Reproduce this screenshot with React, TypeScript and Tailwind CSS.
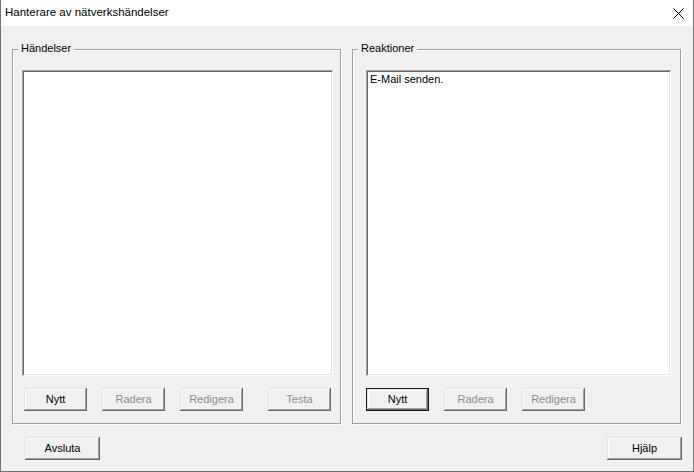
import React from "react";

const bevel =
  "shadow-[inset_-1px_-1px_#696969,inset_1px_1px_#e3e3e3,inset_-2px_-2px_#a0a0a0,inset_2px_2px_#ffffff]";

type BtnProps = {
  label: string;
  disabled?: boolean;
  isDefault?: boolean;
  className?: string;
};

const Button = ({ label, disabled, isDefault, className = "" }: BtnProps) => {
  if (isDefault) {
    return (
      <div className={`h-[23px] border border-[#1a1a1a] ${className}`}>
        <div className={`flex h-full w-full items-center justify-center bg-[#f0f0f0] text-black ${bevel}`}>
          {label}
        </div>
      </div>
    );
  }
  return (
    <div
      className={`flex h-[23px] items-center justify-center bg-[#f0f0f0] ${bevel} ${
        disabled ? "text-[#8d8d8d]" : "text-black"
      } ${className}`}
    >
      {label}
    </div>
  );
};

// etched group box with its caption sitting over the top line
const GroupBox = ({ title, children }: { title: string; children: React.ReactNode }) => (
  <div className="relative h-[375px] w-[329px] border border-[#a0a0a0] shadow-[inset_1px_1px_#ffffff,1px_1px_#ffffff]">
    <span className="absolute left-[5px] top-[-8px] bg-[#f0f0f0] px-[3px] leading-[13px] text-black">
      {title}
    </span>
    {children}
  </div>
);

const ListBox = ({ items, className = "" }: { items: string[]; className?: string }) => (
  <div
    className={`h-[306px] bg-white pl-[4px] pt-[3px] shadow-[inset_1px_1px_#a0a0a0,inset_-1px_-1px_#ffffff,inset_2px_2px_#696969,inset_-2px_-2px_#e3e3e3] ${className}`}
  >
    {items.map((it) => (
      <div key={it} className="leading-[13px]">
        {it}
      </div>
    ))}
  </div>
);

export default function App() {
  return (
    <div
      className="flex h-[472px] w-[694px] flex-col border-x border-b border-[#707070] bg-[#f0f0f0] text-[11px]"
      style={{ fontFamily: '"Liberation Sans", Arial, sans-serif' }}
    >
      {/* Title bar */}
      <div className="flex h-[26px] items-center justify-between bg-white pl-[4px] pr-[9px]">
        <span className="text-[11.5px] text-black">Hanterare av nätverkshändelser</span>
        <svg width="11" height="11" viewBox="0 0 11 11" className="text-black">
          <path d="M0.5 0.5L10.5 10.5M10.5 0.5L0.5 10.5" stroke="currentColor" strokeWidth="1" />
        </svg>
      </div>

      {/* Group boxes */}
      <div className="mt-[23px] flex gap-[11px] pl-[11px]">
        <GroupBox title="Händelser">
          <div className="flex flex-col pl-[9px] pt-[20px]">
            <ListBox items={[]} className="w-[311px]" />
            <div className="mt-[12px] flex">
              <Button label="Nytt" className="ml-[2px] w-[63px]" />
              <Button label="Radera" disabled className="ml-[15px] w-[63px]" />
              <Button label="Redigera" disabled className="ml-[15px] w-[63px]" />
              <Button label="Testa" disabled className="ml-[25px] w-[63px]" />
            </div>
          </div>
        </GroupBox>
        <GroupBox title="Reaktioner">
          <div className="flex flex-col pl-[13px] pt-[20px]">
            <ListBox items={["E-Mail senden."]} className="w-[305px]" />
            <div className="mt-[12px] flex">
              <Button label="Nytt" isDefault className="w-[63px]" />
              <Button label="Radera" disabled className="ml-[15px] w-[63px]" />
              <Button label="Redigera" disabled className="ml-[15px] w-[63px]" />
            </div>
          </div>
        </GroupBox>
      </div>

      {/* Bottom buttons */}
      <div className="mt-[13px] flex justify-between pl-[24px] pr-[11px]">
        <Button label="Avsluta" className="w-[75px]" />
        <Button label="Hjälp" className="w-[75px]" />
      </div>
    </div>
  );
}
